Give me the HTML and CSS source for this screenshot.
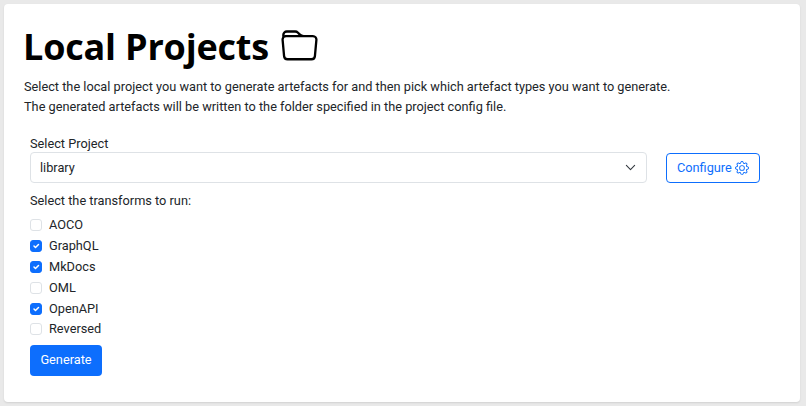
FILE: index.html
```html
<!DOCTYPE html>
<html lang="en">
<head>
<meta charset="utf-8">
<title>Local Projects</title>
<link rel="stylesheet" href="styles.css">
</head>
<body>
<main class="card">
  <h1 class="title">Local Projects
    <svg class="folder" viewBox="0 0 16 16" fill="currentColor"><path d="M.54 3.87.5 3a2 2 0 0 1 2-2h3.672a2 2 0 0 1 1.414.586l.828.828A2 2 0 0 0 9.828 3h3.982a2 2 0 0 1 1.992 2.181l-.637 7A2 2 0 0 1 13.174 14H2.826a2 2 0 0 1-1.991-1.819l-.637-7a2 2 0 0 1 .342-1.31zM2.19 4a1 1 0 0 0-.996 1.09l.637 7a1 1 0 0 0 .995.91h10.348a1 1 0 0 0 .995-.91l.637-7A1 1 0 0 0 13.81 4H2.19zm4.69-1.707A1 1 0 0 0 6.172 2H2.5a1 1 0 0 0-1 .981l.006.139C1.72 3.042 1.95 3 2.19 3h5.396l-.707-.707z"/></svg>
  </h1>
  <p class="intro">Select the local project you want to generate artefacts for and then pick which artefact types you want to generate.<br>The generated artefacts will be written to the folder specified in the project config file.</p>
  <form class="form">
    <div class="project-row">
      <div class="project-field">
        <label class="label" for="project">Select Project</label>
        <div class="select">
          <span>library</span>
          <svg class="chevron" viewBox="0 0 16 16" fill="none" stroke="#343a40" stroke-width="2" stroke-linecap="round" stroke-linejoin="round"><path d="m2 5 6 6 6-6"/></svg>
        </div>
      </div>
      <button type="button" class="btn-outline">Configure
        <svg class="gear" viewBox="0 0 16 16" fill="currentColor"><path d="M8 4.754a3.246 3.246 0 1 0 0 6.492 3.246 3.246 0 0 0 0-6.492zM5.754 8a2.246 2.246 0 1 1 4.492 0 2.246 2.246 0 0 1-4.492 0z"/><path d="M9.796 1.343c-.527-1.79-3.065-1.79-3.592 0l-.094.319a.873.873 0 0 1-1.255.52l-.292-.16c-1.64-.892-3.433.902-2.54 2.541l.159.292a.873.873 0 0 1-.52 1.255l-.319.094c-1.79.527-1.79 3.065 0 3.592l.319.094a.873.873 0 0 1 .52 1.255l-.16.292c-.892 1.64.901 3.434 2.541 2.54l.292-.159a.873.873 0 0 1 1.255.52l.094.319c.527 1.79 3.065 1.79 3.592 0l.094-.319a.873.873 0 0 1 1.255-.52l.292.16c1.64.893 3.434-.902 2.54-2.541l-.159-.292a.873.873 0 0 1 .52-1.255l.319-.094c1.79-.527 1.79-3.065 0-3.592l-.319-.094a.873.873 0 0 1-.52-1.255l.16-.292c.893-1.64-.902-3.433-2.541-2.54l-.292.159a.873.873 0 0 1-1.255-.52l-.094-.319zm-2.633.283c.246-.835 1.428-.835 1.674 0l.094.319a1.873 1.873 0 0 0 2.693 1.115l.291-.16c.764-.415 1.6.42 1.184 1.185l-.159.292a1.873 1.873 0 0 0 1.116 2.692l.318.094c.835.246.835 1.428 0 1.674l-.319.094a1.873 1.873 0 0 0-1.115 2.693l.16.291c.415.764-.42 1.6-1.185 1.184l-.291-.159a1.873 1.873 0 0 0-2.693 1.116l-.094.318c-.246.835-1.428.835-1.674 0l-.094-.319a1.873 1.873 0 0 0-2.692-1.115l-.292.16c-.764.415-1.6-.42-1.184-1.185l.159-.291A1.873 1.873 0 0 0 1.945 8.93l-.319-.094c-.835-.246-.835-1.428 0-1.674l.319-.094A1.873 1.873 0 0 0 3.06 4.377l-.16-.292c-.415-.764.42-1.6 1.185-1.184l.292.159a1.873 1.873 0 0 0 2.692-1.115l.094-.319z"/></svg>
      </button>
    </div>
    <p class="label transforms">Select the transforms to run:</p>
    <ul class="checks">
      <li class="check"><span class="box"></span>AOCO</li>
      <li class="check"><span class="box on"><svg viewBox="0 0 20 20" width="12" height="12" fill="none" stroke="#fff" stroke-width="3" stroke-linecap="round" stroke-linejoin="round"><path d="m6 10 3 3 6-6"/></svg></span>GraphQL</li>
      <li class="check"><span class="box on"><svg viewBox="0 0 20 20" width="12" height="12" fill="none" stroke="#fff" stroke-width="3" stroke-linecap="round" stroke-linejoin="round"><path d="m6 10 3 3 6-6"/></svg></span>MkDocs</li>
      <li class="check"><span class="box"></span>OML</li>
      <li class="check"><span class="box on"><svg viewBox="0 0 20 20" width="12" height="12" fill="none" stroke="#fff" stroke-width="3" stroke-linecap="round" stroke-linejoin="round"><path d="m6 10 3 3 6-6"/></svg></span>OpenAPI</li>
      <li class="check"><span class="box"></span>Reversed</li>
    </ul>
    <button type="button" class="btn-primary">Generate</button>
  </form>
</main>
</body>
</html>
```
FILE: styles.css
```css
* { box-sizing: border-box; }
html, body { height: 100%; }
body {
  margin: 0;
  padding: 4px 6px 4px 4px;
  background: #e9e9e9;
  font-family: Roboto, "Noto Sans", "Liberation Sans", sans-serif;
  font-size: 12.75px;
  line-height: 20px;
  color: #212529;
  overflow: hidden;
}
.card {
  height: 398px;
  background: #fff;
  border-radius: 4px;
  padding: 20px 20px 0 19px;
  box-shadow: 0 1px 2px rgba(0, 0, 0, .1);
}
.title {
  display: flex;
  align-items: center;
  gap: 12px;
  margin: 0 0 7px;
  height: 46px;
  font-family: "Open Sans", sans-serif;
  font-size: 36px;
  letter-spacing: -.2px;
  line-height: 46px;
  font-weight: 700;
  color: #000;
}
.folder { width: 37px; height: 37px; flex: none; margin-top: -1px; }
.intro { margin: 0 0 18px 1px; }
.form { padding-left: 7px; }
.project-row { display: flex; align-items: flex-end; }
.project-field { width: 617px; }
.label { display: block; height: 17px; line-height: 17px; }
.select {
  display: flex;
  align-items: center;
  justify-content: space-between;
  height: 31px;
  padding: 0 10px 0 9px;
  border: 1px solid #dee2e6;
  border-radius: 4px;
  background: #fff;
}
.chevron { width: 11px; height: 11px; }
.chevron path { stroke-width: 1.6; }
.btn-outline {
  display: flex;
  align-items: center;
  gap: 3px;
  height: 30px;
  width: 94px;
  margin-left: 19px;
  padding: 0 10px;
  border: 1px solid #0d6efd;
  border-radius: 4px;
  background: #fff;
  color: #0d6efd;
  font: inherit;
}
.gear { width: 14px; height: 14px; flex: none; }
.transforms { margin: 7px 0 4px; height: 21px; line-height: 21px; }
.checks { list-style: none; margin: 0; padding: 0; }
.check { display: flex; align-items: center; gap: 7px; height: 20.8px; }
.box {
  display: flex;
  align-items: center;
  justify-content: center;
  width: 12px;
  height: 12px;
  border: 1px solid #dee2e6;
  border-radius: 3px;
  background: #fff;
}
.box.on { background: #0d6efd; border-color: #0d6efd; }
.btn-primary {
  display: block;
  width: 72px;
  height: 31px;
  margin-top: 5px;
  padding: 0;
  border: 0;
  border-radius: 4px;
  background: #0d6efd;
  color: #fff;
  font: inherit;
}
```
